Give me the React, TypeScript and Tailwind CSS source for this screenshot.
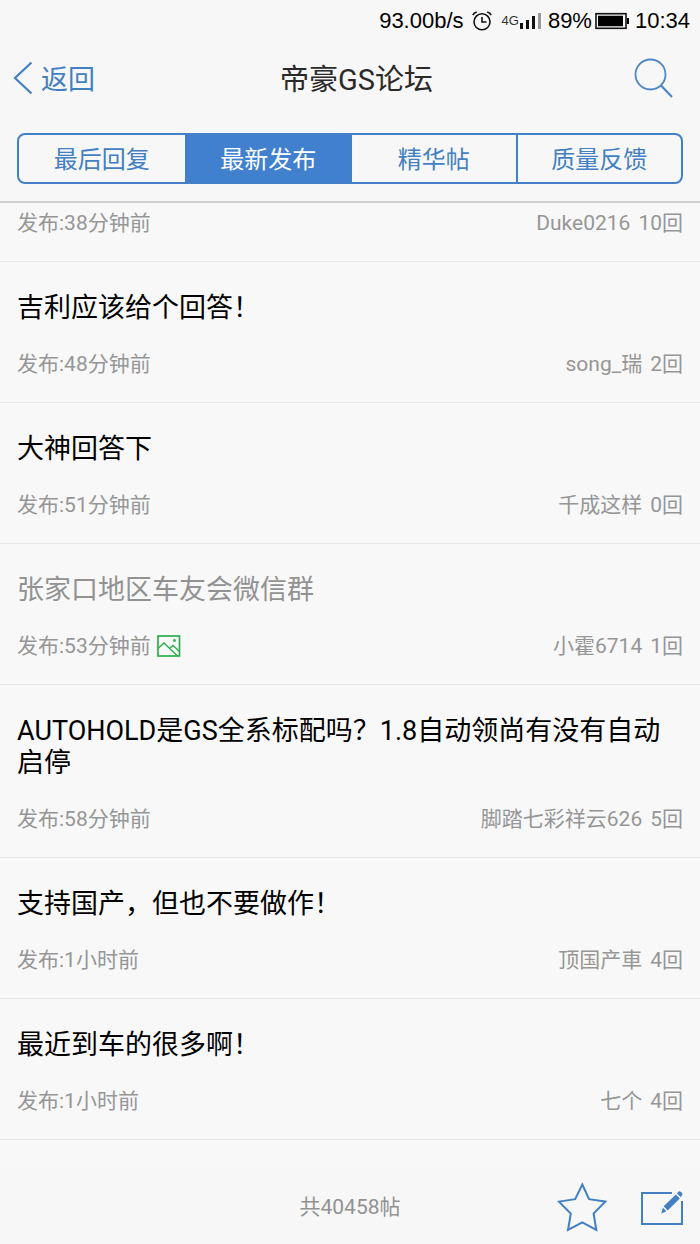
type Post = {
    title?: string;
    time: string;
    author: string;
    replies: number;
    read?: boolean;
    image?: boolean;
};

const tabs = ["最后回复", "最新发布", "精华帖", "质量反馈"];

const posts: Post[] = [
    { time: "38分钟前", author: "Duke0216", replies: 10 },
    { title: "吉利应该给个回答！", time: "48分钟前", author: "song_瑞", replies: 2 },
    { title: "大神回答下", time: "51分钟前", author: "千成这样", replies: 0 },
    { title: "张家口地区车友会微信群", time: "53分钟前", author: "小霍6714", replies: 1, read: true, image: true },
    { title: "AUTOHOLD是GS全系标配吗？1.8自动领尚有没有自动启停", time: "58分钟前", author: "脚踏七彩祥云626", replies: 5 },
    { title: "支持国产，但也不要做作！", time: "1小时前", author: "顶国产車", replies: 4 },
    { title: "最近到车的很多啊！", time: "1小时前", author: "七个", replies: 4 },
];

function StatusBar() {
    return (
        <div className="flex h-[41px] items-center justify-end pr-[10px] font-['Liberation_Sans',sans-serif] text-[22px] leading-none text-black">
            <span>93.00b/s</span>
            <svg className="ml-2 h-5 w-5" viewBox="0 0 20 20" fill="none" stroke="#111" strokeWidth="1.6">
                <circle cx="10" cy="10.8" r="8" />
                <path d="M10 6v5h4.5M.8 4.2Q2 1.6 4.8 1M19.2 4.2Q18 1.6 15.2 1" />
            </svg>
            <span className="ml-[10px] text-[13px] text-[#333]">4G</span>
            <svg className="ml-px h-[18px] w-[22px]" viewBox="0 0 22 18">
                <path d="M0 11h3v6H0zM6 8h3v9H6zM12 4h3v13h-3z" fill="#111" />
                <path d="M18 1h3v16h-3z" fill="#999" />
            </svg>
            <span className="ml-[6px]">89%</span>
            <svg className="ml-[3px] h-[18px] w-[34px]" viewBox="0 0 34 18">
                <rect x="1" y="1.7" width="30" height="14.6" fill="none" stroke="#111" strokeWidth="1.6" />
                <path d="M3 3.7h25v10.6H3zM32 6h2v6h-2z" fill="#000" />
            </svg>
            <span className="ml-[6px]">10:34</span>
        </div>
    );
}

function PostRow({ post }: { post: Post }) {
    return (
        <li className="border-b border-[#e7e7e7] px-[17px] pb-[26px]">
            {post.title ? (
                <h2 className={`mb-7 pt-[30px] text-[27px] leading-8 ${post.read ? "text-[#929292]" : "text-black"}`}>
                    <a href="#">{post.title}</a>
                </h2>
            ) : (
                <div className="h-2" />
            )}
            <div className="flex items-center justify-between text-[21px] leading-6 text-[#969696]">
                <div className="flex items-center gap-[6px]">
                    <span>发布:{post.time}</span>
                    {post.image && (
                        <svg className="h-[22px] w-6" viewBox="0 0 24 22" fill="none" stroke="#2cb04a" strokeWidth="1.7">
                            <rect x="1" y="1" width="21.5" height="20" />
                            <path d="M1 13.5L7 8l13.5 13M12.5 13.5L16 10.5l6.5 6" strokeWidth="1.4" />
                            <circle cx="17.5" cy="5.5" r="1.4" fill="#2cb04a" stroke="none" />
                        </svg>
                    )}
                </div>
                <div className="flex gap-2">
                    <span>{post.author}</span>
                    <span>{post.replies}回</span>
                </div>
            </div>
        </li>
    );
}

export default function App() {
    return (
        <div className="flex min-h-screen flex-col bg-[#f8f8f8] font-[Roboto,'Noto_Sans_CJK_SC',sans-serif]">
            <header className="border-b-2 border-[#cfcfcf] bg-[#f7f7f7]">
                <StatusBar />
                <div className="grid h-[74px] grid-cols-[1fr_auto_1fr] items-center pl-[13px]">
                    <a href="#" className="flex items-center gap-2 text-[27px] leading-8 text-[#437fc3]">
                        <svg className="h-[34px] w-5" viewBox="0 0 20 34" fill="none" stroke="currentColor" strokeWidth="2.2">
                            <path d="M18.5 1.5L2 17l16.5 15.5" />
                        </svg>
                        <span className="pt-1">返回</span>
                    </a>
                    <h1 className="pt-1 text-[29px] leading-8 text-[#2a2a2a]">帝豪GS论坛</h1>
                    <button aria-label="搜索" className="mr-[27px] justify-self-end">
                        <svg className="h-10 w-[39px]" viewBox="0 0 39 40" fill="none" stroke="#4f86c6" strokeWidth="1.8">
                            <circle cx="16.5" cy="16.5" r="15" />
                            <path d="M27 27.5l11 11.5" strokeWidth="2.2" />
                        </svg>
                    </button>
                </div>
                <nav className="mx-[17px] mb-[17px] mt-[18px] grid h-[51px] grid-cols-4 overflow-hidden rounded-lg border-2 border-[#4380c8]">
                    {tabs.map((tab, i) => (
                        <button
                            key={tab}
                            aria-pressed={i === 1}
                            className={`border-[#4380c8] pt-[2px] text-2xl leading-8 ${i > 0 ? "border-l-2" : ""} ${i === 1 ? "bg-[#417fcf] text-white" : "text-[#437fc3]"}`}
                        >
                            {tab}
                        </button>
                    ))}
                </nav>
            </header>

            <ul className="flex-1">
                {posts.map((post) => (
                    <PostRow key={post.author} post={post} />
                ))}
            </ul>

            <footer className="grid h-[74px] grid-cols-[1fr_auto_1fr] items-center bg-[#f7f7f7] px-[17px]">
                <p className="col-start-2 text-[21px] leading-6 text-[#929292]">共40458帖</p>
                <div className="flex items-center gap-[34px] justify-self-end">
                    <button aria-label="收藏">
                        <svg className="h-[50px] w-[50px]" viewBox="0 0 50 50" fill="none" stroke="#437fc3" strokeWidth="2">
                            <path d="M25.3 2.5l6.8 14.7 16.1 2.4-11.6 11.9 2.7 16.5-14-7.6-14.3 7.6 2.8-16.5L2 19.6l16.2-2.4z" />
                        </svg>
                    </button>
                    <button aria-label="发帖">
                        <svg className="h-[38px] w-[42px]" viewBox="0 0 42 38" fill="none" stroke="#437fc3" strokeWidth="2">
                            <path d="M31 5H1v31h40V13" />
                            <path d="M22.7 18.3L34.8 6.4l4 4-12.1 12zM35.9 5.3l1.8-1.8q1-.8 2 .2l1.4 1.4q.8 1 0 2L39.8 9.2z" fill="#437fc3" stroke="none" />
                            <path d="M21.8 19.6l3.6 3.6-5 2.3z" fill="#437fc3" stroke="none" />
                        </svg>
                    </button>
                </div>
            </footer>
        </div>
    );
}
